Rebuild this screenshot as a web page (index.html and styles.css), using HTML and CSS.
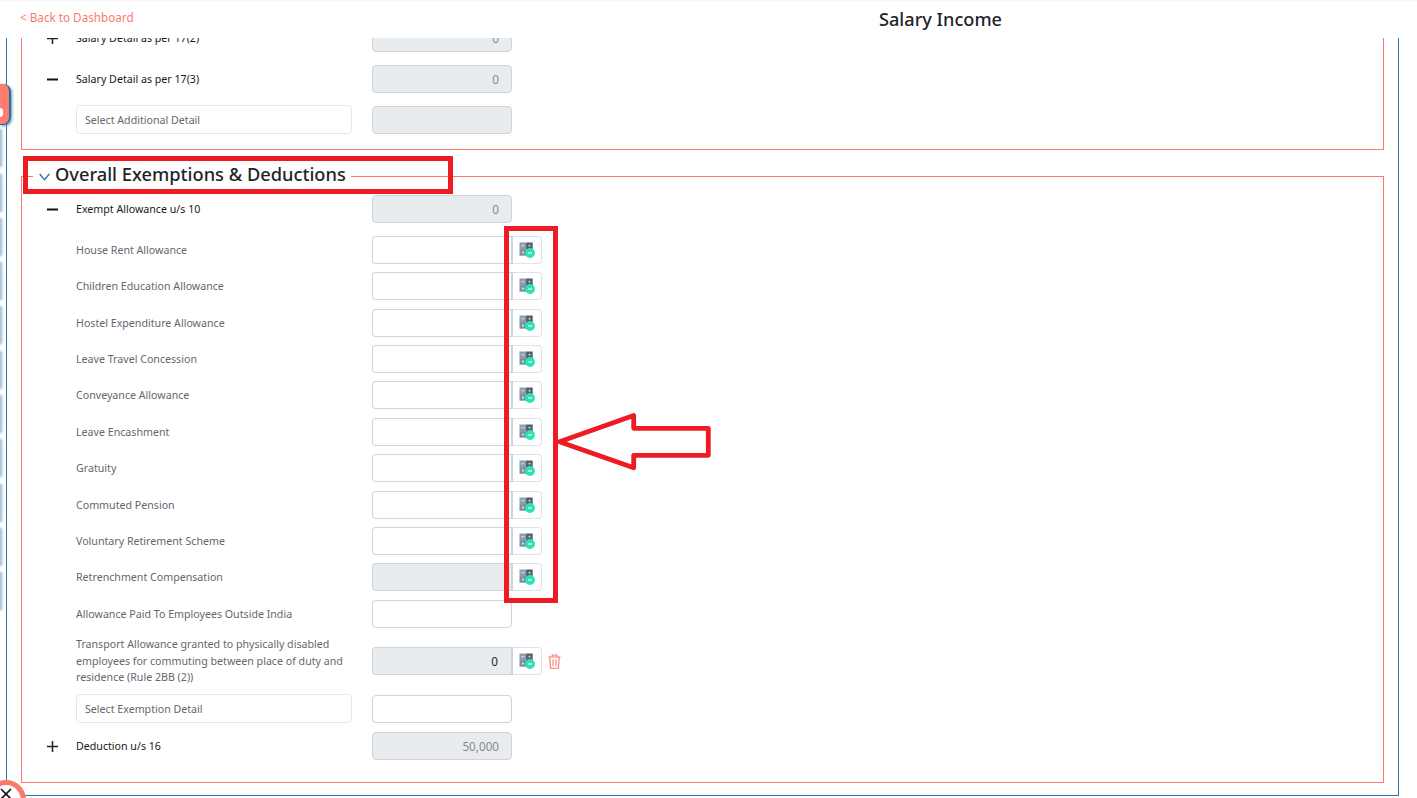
FILE: index.html
```html
<!DOCTYPE html>
<html lang="en">
<head>
<meta charset="utf-8">
<title>Salary Income</title>
<link rel="stylesheet" href="styles.css">
</head>
<body>
<svg class="defs" width="0" height="0" aria-hidden="true">
  <symbol id="calc" viewBox="0 0 16 16">
    <rect x="0.500" y="0.500" width="6.600" height="6.600" fill="#8c9eab"/>
    <rect x="7.100" y="0.500" width="6.600" height="6.600" fill="#4f5f6b"/>
    <rect x="0.500" y="7.100" width="6.600" height="6.600" fill="#7a8f9e"/>
    <rect x="7.100" y="7.100" width="6.600" height="6.600" fill="#4f5f6b"/>
    <rect x="2.200" y="3.300" width="3.200" height="0.900" fill="#dfe6ea"/>
    <rect x="9.600" y="2.800" width="1.800" height="1.800" fill="#c9d2d8"/>
    <rect x="3" y="9.600" width="1.800" height="1.800" fill="#dfe6ea"/>
    <circle cx="11" cy="11" r="4.900" fill="#2ae4b4"/>
    <rect x="9" y="10.200" width="4" height="1.600" fill="#c8f7e8"/>
  </symbol>
</svg>

<div class="page">
  <header class="topbar">
    <a class="back" href="#">&lt; Back to Dashboard</a>
    <h1 class="title">Salary Income</h1>
  </header>

  <main class="viewport">
    <div class="panel">
      <section class="box-first">
        <div class="row row-major">
          <span class="toggle"><svg width="11" height="11" viewBox="0 0 11 11"><path d="M0 5.500h11M5.500 0v11" stroke="#222" stroke-width="1.500"/></svg></span>
          <span class="label label-strong">Salary Detail as per 17(2)</span>
          <input class="field field-off" value="0" readonly>
        </div>
        <div class="row row-major">
          <span class="toggle"><svg width="11" height="11" viewBox="0 0 11 11"><path d="M0 5.500h11" stroke="#111" stroke-width="2"/></svg></span>
          <span class="label label-strong">Salary Detail as per 17(3)</span>
          <input class="field field-off" value="0" readonly>
        </div>
        <div class="row row-last">
          <span class="toggle"></span>
          <span class="label"><span class="picker picker-first">Select Additional Detail</span></span>
          <input class="field field-off" readonly>
        </div>
      </section>

      <fieldset class="box-second">
        <legend class="legend">
          <svg class="chevron" width="11" height="8" viewBox="0 0 11 8"><path d="M0.700 1 5.500 6.600 10.300 1" fill="none" stroke="#2a76a8" stroke-width="1.400"/></svg>
          <span class="legend-text">Overall Exemptions &amp; Deductions</span>
        </legend>

        <div class="row row-lead">
          <span class="toggle"><svg width="11" height="11" viewBox="0 0 11 11"><path d="M0 5.500h11" stroke="#111" stroke-width="2"/></svg></span>
          <span class="label label-strong">Exempt Allowance u/s 10</span>
          <input class="field field-off" value="0" readonly>
        </div>

        <div class="row row-sub"><span class="toggle"></span><span class="label">House Rent Allowance</span><input class="field field-join" readonly><button class="calc-btn"><svg width="16" height="16"><use href="#calc"/></svg></button></div>
        <div class="row row-sub"><span class="toggle"></span><span class="label">Children Education Allowance</span><input class="field field-join" readonly><button class="calc-btn"><svg width="16" height="16"><use href="#calc"/></svg></button></div>
        <div class="row row-sub"><span class="toggle"></span><span class="label">Hostel Expenditure Allowance</span><input class="field field-join" readonly><button class="calc-btn"><svg width="16" height="16"><use href="#calc"/></svg></button></div>
        <div class="row row-sub"><span class="toggle"></span><span class="label">Leave Travel Concession</span><input class="field field-join" readonly><button class="calc-btn"><svg width="16" height="16"><use href="#calc"/></svg></button></div>
        <div class="row row-sub"><span class="toggle"></span><span class="label">Conveyance Allowance</span><input class="field field-join" readonly><button class="calc-btn"><svg width="16" height="16"><use href="#calc"/></svg></button></div>
        <div class="row row-sub"><span class="toggle"></span><span class="label">Leave Encashment</span><input class="field field-join" readonly><button class="calc-btn"><svg width="16" height="16"><use href="#calc"/></svg></button></div>
        <div class="row row-sub"><span class="toggle"></span><span class="label">Gratuity</span><input class="field field-join" readonly><button class="calc-btn"><svg width="16" height="16"><use href="#calc"/></svg></button></div>
        <div class="row row-sub"><span class="toggle"></span><span class="label">Commuted Pension</span><input class="field field-join" readonly><button class="calc-btn"><svg width="16" height="16"><use href="#calc"/></svg></button></div>
        <div class="row row-sub"><span class="toggle"></span><span class="label">Voluntary Retirement Scheme</span><input class="field field-join" readonly><button class="calc-btn"><svg width="16" height="16"><use href="#calc"/></svg></button></div>
        <div class="row row-sub"><span class="toggle"></span><span class="label">Retrenchment Compensation</span><input class="field field-off field-join" readonly><button class="calc-btn"><svg width="16" height="16"><use href="#calc"/></svg></button></div>
        <div class="row row-sub"><span class="toggle"></span><span class="label">Allowance Paid To Employees Outside India</span><input class="field" readonly></div>

        <div class="row row-tall">
          <span class="toggle"></span>
          <span class="label label-wrap">Transport Allowance granted to physically disabled employees for commuting between place of duty and residence (Rule 2BB (2))</span>
          <input class="field field-off field-join field-dark" value="0" readonly>
          <button class="calc-btn"><svg width="16" height="16"><use href="#calc"/></svg></button>
          <svg class="trash" width="13" height="15" viewBox="0 0 13 15"><path d="M0.500 3h12M4.200 3V1h4.600v2M1.800 3l.7 11.200h8L11.200 3M5 5.500v6.500M8 5.500v6.500" fill="none" stroke="#fb7a6d" stroke-width="1.100"/></svg>
        </div>

        <div class="row row-select">
          <span class="toggle"></span>
          <span class="label"><span class="picker">Select Exemption Detail</span></span>
          <input class="field" readonly>
        </div>

        <div class="row">
          <span class="toggle"><svg width="11" height="11" viewBox="0 0 11 11"><path d="M0 5.500h11M5.500 0v11" stroke="#222" stroke-width="1.500"/></svg></span>
          <span class="label label-strong">Deduction u/s 16</span>
          <input class="field field-off" value="50,000" readonly>
        </div>
      </fieldset>
    </div>
  </main>

  <div class="rail">
    <div class="rail-active"><span class="rail-glyph"></span></div>
    <div class="rail-tab"></div>
    <div class="rail-tab"></div>
    <div class="rail-tab"></div>
    <div class="rail-tab"></div>
    <div class="rail-tab"></div>
    <div class="rail-tab"></div>
    <div class="rail-tab"></div>
    <div class="rail-tab"></div>
    <div class="rail-tab"></div>
    <div class="rail-tab"></div>
    <div class="rail-tab"></div>
  </div>

  <div class="close-round"><svg width="12" height="12" viewBox="0 0 12 12"><path d="M1 1l10 10M11 1L1 11" stroke="#111" stroke-width="1.700"/></svg></div>

  <div class="mark mark-title"></div>
  <div class="mark mark-column"></div>
  <svg class="mark-arrow" width="170" height="70" viewBox="0 0 170 70">
    <path d="M6.500 28.700 80.700 2.500V15.300H155.300V42.300H80.700V54.800Z" fill="#fff" stroke="#ed1c24" stroke-width="4.800" stroke-linejoin="round"/>
  </svg>
</div>
</body>
</html>
```

FILE: styles.css
```css
* { box-sizing: border-box; }

html, body {
  margin: 0;
  padding: 0;
  background: #fff;
}

body {
  font-family: "Noto Sans", "Open Sans", sans-serif;
  color: #212529;
}

.defs { position: absolute; }

.page {
  position: relative;
  width: 1417px;
  height: 798px;
  overflow: hidden;
  display: flex;
  flex-direction: column;
  border-top: 1px solid #f6f6f6;
}

.topbar {
  flex: 0 0 37px;
  display: flex;
  align-items: center;
  padding-left: 20px;
}

.back {
  width: 113px;
  font-size: 11.700px;
  color: #fb7a6d;
  text-decoration: none;
  white-space: nowrap;
  margin-top: -5px;
}

.title {
  margin: 1px 0 0 746px;
  font-size: 18.150px;
  font-weight: 500;
  line-height: 1.4;
  color: #212529;
}

.viewport {
  flex: 1;
  overflow: hidden;
}

.panel {
  display: flow-root;
  width: 1393px;
  height: 758px;
  margin-left: 6px;
  padding: 0 14px;
  border: 1px solid #2a76a8;
  border-top: 0;
}

.box-first {
  margin-top: -14px;
  padding: 0 0 15px 25px;
  border: 1px solid #fb7a6d;
  border-top: 0;
  width: 1363px;
}

.box-second {
  width: 1363px;
  margin: 14px 0 0;
  padding: 7px 0 22px 25px;
  min-width: 0;
  border: 1px solid #fb7a6d;
}

.legend {
  margin-left: -14px;
  padding: 0 5px 0 6px;
  height: 24px;
  display: flex;
  align-items: center;
  gap: 5px;
}

.chevron { margin-top: 1px; }

.legend-text {
  margin-top: -4px;
  font-size: 18.250px;
  font-weight: 500;
  line-height: 26px;
  color: #212529;
  white-space: nowrap;
}

.row {
  display: flex;
  align-items: center;
  height: 28px;
}

.row-major { margin-bottom: 13px; }
.row-lead { margin-bottom: 12.800px; }
.row-sub { margin-bottom: 8.400px; }
.row-tall { height: 50px; margin-bottom: 8px; }
.row-select { height: 29px; margin-bottom: 9px; }

.toggle {
  flex: 0 0 29px;
  display: flex;
  align-items: center;
}

.label {
  flex: 0 0 296px;
  font-size: 10.650px;
  line-height: 16px;
  color: #66666e;
}

.label-strong { color: #16191c; }

.label-wrap {
  padding-right: 20px;
  height: 50px;
  line-height: 16.500px;
}

.picker {
  display: flex;
  align-items: center;
  width: 276px;
  height: 29px;
  padding: 1px 0 0 8px;
  border: 1px solid #e6e7ea;
  border-radius: 4px;
  background: #fff;
}

.picker-first { margin-top: -1px; }

.field {
  width: 140px;
  height: 28px;
  padding: 0 12px;
  border: 1px solid #ced4da;
  border-radius: 4px;
  background: #fff;
  font-family: inherit;
  font-size: 11.700px;
  color: #7f8a90;
  text-align: right;
  outline: none;
}

.field-off { background: #e9ecef; }
.field-dark { color: #212529; }

.field-join {
  width: 141px;
  padding-right: 13px;
  border-top-right-radius: 0;
  border-bottom-right-radius: 0;
  border-right-width: 2px;
}

.calc-btn {
  display: flex;
  align-items: center;
  justify-content: center;
  width: 29px;
  height: 28px;
  padding: 0;
  border: 1px solid #dfe2e6;
  border-left: 0;
  border-radius: 0 4px 4px 0;
  background: #fff;
}

.trash { margin-left: 6px; }

.rail {
  position: absolute;
  left: 0;
  top: 83px;
  display: flex;
  flex-direction: column;
  gap: 8.300px;
}

.rail-active {
  position: relative;
  width: 11px;
  height: 41px;
  margin-bottom: -3px;
  overflow: hidden;
  border-radius: 0 8px 8px 0;
  background: #fd7c6f;
  border-right: 2px solid #2a6f97;
  border-bottom: 1px solid #2a6f97;
  box-shadow: 1px 1px 3px #5b97bd;
}

.rail-glyph {
  position: absolute;
  left: -3px;
  top: 24px;
  width: 6px;
  height: 9px;
  border-radius: 3px;
  background: #fff;
}

.rail-tab {
  width: 1px;
  height: 36px;
  background: #a7c6da;
  box-shadow: 0 0 3px 1px #8db6d0;
}

.close-round {
  position: absolute;
  left: -14px;
  top: 779px;
  width: 40px;
  height: 40px;
  border: 5px solid #fb7a6d;
  border-radius: 50%;
  background: #fff;
  display: flex;
  justify-content: center;
  padding-top: 3px;
}

.mark {
  position: absolute;
  border: 5px solid #ed1c24;
}

.mark-title {
  left: 23px;
  top: 155px;
  width: 430px;
  height: 38px;
}

.mark-column {
  left: 504px;
  top: 225px;
  width: 54px;
  height: 377px;
}

.mark-arrow {
  position: absolute;
  left: 553px;
  top: 412px;
  overflow: visible;
}
```
